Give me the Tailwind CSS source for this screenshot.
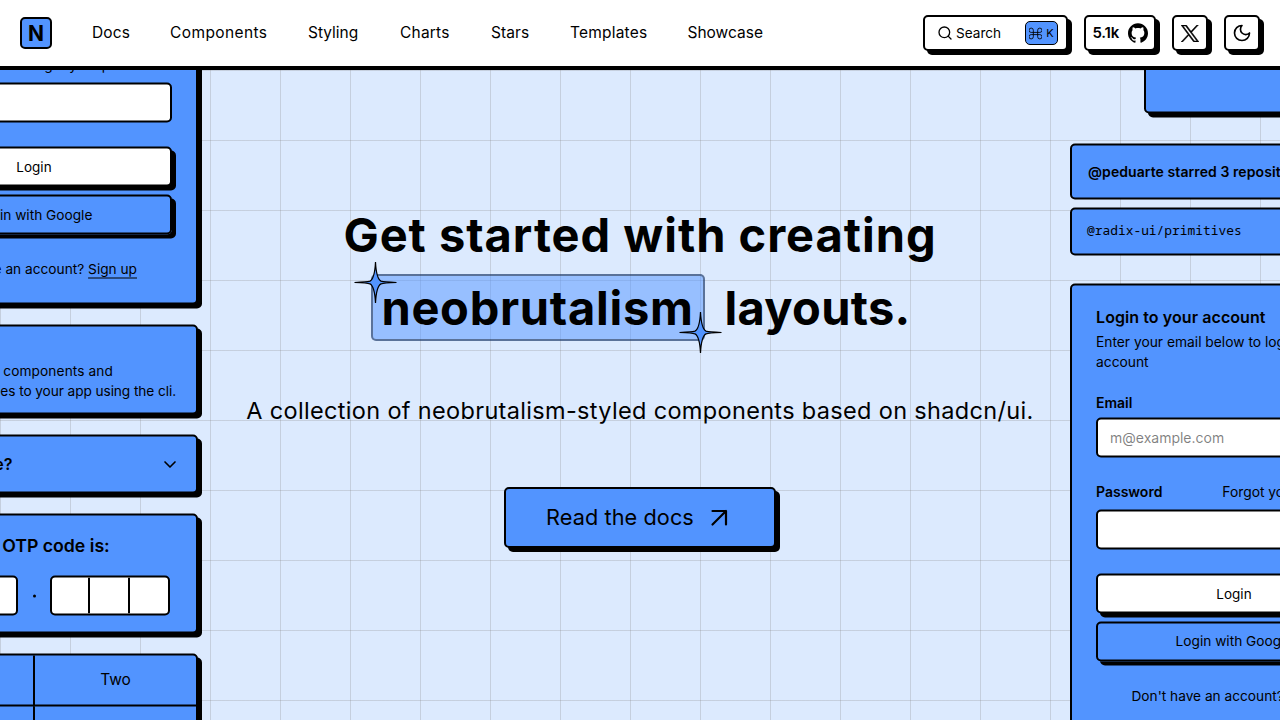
<!DOCTYPE html>
<html lang="en">
<head>
<meta charset="utf-8">
<title>Neobrutalism components</title>
<script src="https://cdn.jsdelivr.net/npm/@tailwindcss/browser@4"></script>
</head>
<body class="h-[720px] w-[1280px] overflow-hidden bg-[#dceafe] font-['Inter',sans-serif] text-black">
<header class="flex h-[70px] items-center justify-between border-b-4 border-black bg-white pr-5 pl-5">
  <div class="flex items-center">
    <div class="flex size-8 items-center justify-center rounded-[5px] border-2 border-black bg-[#5294ff] text-[21px] leading-none font-bold">N</div>
    <nav class="ml-10 flex gap-10 text-[15.5px] leading-6">
      <a class="w-[38px] tracking-[0.1px] whitespace-nowrap">Docs</a>
      <a class="w-[98px] tracking-[0.4px] whitespace-nowrap">Components</a>
      <a class="w-[52px] whitespace-nowrap">Styling</a>
      <a class="w-[51px] tracking-[0.2px] whitespace-nowrap">Charts</a>
      <a class="w-[39px] tracking-[0.1px] whitespace-nowrap">Stars</a>
      <a class="w-[77.5px] tracking-[0.2px] whitespace-nowrap">Templates</a>
      <a class="w-[76px] whitespace-nowrap">Showcase</a>
    </nav>
  </div>
  <div class="flex items-center gap-4">
    <button class="flex h-9 w-[145px] items-center rounded-[5px] border-2 border-black bg-white pl-3 shadow-[4px_4px_0_0_#000]">
      <svg class="size-4" viewBox="0 0 24 24" fill="none" stroke="currentColor" stroke-width="2" stroke-linecap="round"><circle cx="11" cy="11" r="8"/><path d="m21 21-4.3-4.3"/></svg>
      <span class="ml-[3px] w-[47px] text-left text-[13.6px] leading-5">Search</span>
      <span class="ml-[22px] flex h-6 w-[33px] items-center justify-center gap-1 rounded-[5px] border border-black bg-[#5294ff]">
        <svg class="size-[13px]" viewBox="0 0 24 24" fill="none" stroke="currentColor" stroke-width="1.6"><path d="M16 6v12a4 4 0 1 0 4-4H4a4 4 0 1 0 4 4V6a4 4 0 1 0-4 4h16a4 4 0 1 0-4-4"/></svg>
        <span class="text-[11px] leading-[14px]">K</span>
      </span>
    </button>
    <button class="flex h-9 w-[72px] items-center justify-between rounded-[5px] border-2 border-black bg-white pr-[6px] pl-[6.5px] shadow-[4px_4px_0_0_#000]">
      <span class="text-[15px] leading-5 font-semibold tracking-[-0.2px]">5.1k</span>
      <svg class="size-5" viewBox="0 0 24 24" fill="currentColor"><path d="M12 .297c-6.63 0-12 5.373-12 12 0 5.303 3.438 9.8 8.205 11.385.6.113.82-.258.82-.577 0-.285-.01-1.04-.015-2.04-3.338.724-4.042-1.61-4.042-1.61C4.422 18.07 3.633 17.7 3.633 17.7c-1.087-.744.084-.729.084-.729 1.205.084 1.838 1.236 1.838 1.236 1.07 1.835 2.809 1.305 3.495.998.108-.776.417-1.305.76-1.605-2.665-.3-5.466-1.332-5.466-5.93 0-1.31.465-2.38 1.235-3.22-.135-.303-.54-1.523.105-3.176 0 0 1.005-.322 3.3 1.23.96-.267 1.98-.399 3-.405 1.02.006 2.04.138 3 .405 2.28-1.552 3.285-1.23 3.285-1.23.645 1.653.24 2.873.12 3.176.765.84 1.23 1.91 1.23 3.22 0 4.61-2.805 5.625-5.475 5.92.42.36.81 1.096.81 2.22 0 1.606-.015 2.896-.015 3.286 0 .315.21.69.825.57C20.565 22.092 24 17.592 24 12.297c0-6.627-5.373-12-12-12"/></svg>
    </button>
    <button class="flex size-9 items-center justify-center rounded-[5px] border-2 border-black bg-white shadow-[4px_4px_0_0_#000]">
      <svg class="h-[17px] w-[18px]" viewBox="0 0 1200 1227" preserveAspectRatio="none" fill="currentColor" stroke="currentColor" stroke-width="34"><path d="M714.163 519.284L1160.89 0H1055.03L667.137 450.887L357.328 0H0L468.492 681.821L0 1226.37H105.866L515.491 750.218L842.672 1226.37H1200L714.137 519.284H714.163ZM569.165 687.828L521.697 619.934L144.011 79.6944H306.615L611.412 515.685L658.88 583.579L1055.08 1150.3H892.476L569.165 687.854V687.828Z"/></svg>
    </button>
    <button class="flex size-9 items-center justify-center rounded-[5px] border-2 border-black bg-white shadow-[4px_4px_0_0_#000]">
      <svg class="size-5" viewBox="0 0 24 24" fill="none" stroke="currentColor" stroke-width="2" stroke-linecap="round" stroke-linejoin="round"><path d="M12 3a6 6 0 0 0 9 9 9 9 0 1 1-9-9Z"/></svg>
    </button>
  </div>
</header>

<main class="flex h-[650px] overflow-hidden bg-[linear-gradient(to_right,#80808040_1px,transparent_1px),linear-gradient(to_bottom,#80808040_1px,transparent_1px)] bg-[size:70px_70px]">
  <!-- left column of component previews -->
  <div class="-mt-[213px] -ml-[130px] flex w-[328px] shrink-0 -translate-y-[0.5px] flex-col gap-5 self-start text-sm">
    <section class="h-[448px] rounded-[5px] border-2 border-black bg-[#5294ff] p-6 shadow-[4px_4px_0_0_#000]">
      <h3 class="mb-1.5 text-base leading-none font-semibold">Login to your account</h3>
      <p class="leading-5">Enter your email below to login to your account</p>
      <div class="mt-6 leading-[14px] font-semibold">Email</div>
      <div class="mt-2 flex h-10 items-center rounded-[5px] border-2 border-black bg-white px-3 text-black/50">m@example.com</div>
      <div class="mt-6 flex justify-between leading-5"><b class="font-semibold">Password</b><a class="text-[13.7px]">Forgot your password?</a></div>
      <div class="mt-2 h-10 rounded-[5px] border-2 border-black bg-white"></div>
      <div class="mt-6 flex h-10 items-center justify-center rounded-[5px] border-2 border-black bg-white pt-px text-[13.5px] shadow-[4px_4px_0_0_#000]">Login</div>
      <div class="mt-2 flex h-10 items-center justify-center rounded-[5px] border-2 border-black pt-px text-[13.7px] shadow-[4px_4px_0_0_#000]">Login with Google</div>
      <div class="mt-6 pl-px text-center text-[13.7px] leading-5 whitespace-nowrap">Don't have an account? <a class="underline underline-offset-4">Sign up</a></div>
    </section>
    <section class="flex h-[90px] flex-col justify-end rounded-[5px] border-2 border-black bg-[#5294ff] pr-5 pb-3 text-right text-[13.7px] leading-5 whitespace-nowrap shadow-[4px_4px_0_0_#000]">
      <p class="pr-[63px] tracking-[0.1px]">You can add components and</p>
      <p class="tracking-[-0.09px]">dependencies to your app using the cli.</p>
    </section>
    <section class="flex h-[59px] items-center justify-between rounded-[5px] border-2 border-black bg-[#5294ff] pr-4 pl-4 shadow-[4px_4px_0_0_#000]">
      <b class="pb-px pl-[2px] text-base font-semibold">Is it accessible?</b>
      <svg class="size-5" viewBox="0 0 24 24" fill="none" stroke="currentColor" stroke-width="2" stroke-linecap="round" stroke-linejoin="round"><path d="m6 9 6 6 6-6"/></svg>
    </section>
    <section class="flex h-[120px] flex-col items-center rounded-[5px] border-2 border-black bg-[#5294ff] pt-4 shadow-[4px_4px_0_0_#000]">
      <b class="text-[17.7px] leading-7 font-semibold">Your OTP code is:</b>
      <div class="mt-4 flex items-center">
        <div class="flex h-10 w-[120px] divide-x-2 divide-black overflow-hidden rounded-[5px] border-2 border-black bg-white"><i class="w-[38px]"></i><i class="w-10"></i><i class="flex-1"></i></div>
        <div class="flex w-8 justify-center"><i class="size-[3px] rounded-full bg-black"></i></div>
        <div class="flex h-10 w-[120px] divide-x-2 divide-black overflow-hidden rounded-[5px] border-2 border-black bg-white"><i class="w-[38px]"></i><i class="w-10"></i><i class="flex-1"></i></div>
      </div>
    </section>
    <section class="grid h-[160px] grid-cols-2 grid-rows-[51px_1fr] rounded-[5px] border-2 border-black bg-[#5294ff] text-[15.5px] shadow-[4px_4px_0_0_#000]">
      <div class="flex items-center justify-center border-b-2 border-black">One</div>
      <div class="-ml-px flex items-center justify-center border-b-2 border-l-2 border-black">Two</div>
      <div></div>
      <div class="-ml-px border-l-2 border-black"></div>
    </section>
  </div>

  <!-- hero -->
  <div class="flex w-[872px] shrink-0 flex-col items-center pt-[130px]">
    <h1 class="w-full text-center text-[47px] leading-[72px] font-bold whitespace-nowrap text-black">
      <span class="-mt-px ml-[12px] block tracking-[0.97px]">Get started with creating</span>
      <span class="mt-px ml-[11px] flex justify-center">
        <span class="relative mt-[2px] mr-5 flex h-[67px] w-[334px] items-center justify-center rounded-[5px] border-2 border-black/40 bg-[#5294ff]/50">
          <span class="tracking-[0.72px]">neobrutalism</span>
          <svg class="absolute -top-[15px] -left-[19px] size-[43px]" viewBox="0 0 43 43"><path d="M21.5 1C22.1 13 24.5 18.8 27 20.1 29.5 21 34 21.2 42.5 21.5 34 21.8 29.5 22 27 22.9 24.5 24.2 22.1 30 21.5 42 20.9 30 18.5 24.2 16 22.9 13.5 22 9 21.8.5 21.5 9 21.2 13.5 21 16 20.1 18.5 18.8 20.9 13 21.5 1Z" fill="#5294ff" stroke="#000" stroke-width="1.2"/></svg>
          <svg class="absolute -right-[19px] -bottom-[15px] size-[43px]" viewBox="0 0 43 43"><path d="M21.5 1C22.1 13 24.5 18.8 27 20.1 29.5 21 34 21.2 42.5 21.5 34 21.8 29.5 22 27 22.9 24.5 24.2 22.1 30 21.5 42 20.9 30 18.5 24.2 16 22.9 13.5 22 9 21.8.5 21.5 9 21.2 13.5 21 16 20.1 18.5 18.8 20.9 13 21.5 1Z" fill="#5294ff" stroke="#000" stroke-width="1.2"/></svg>
        </span>
        <span class="w-[184px] text-left tracking-[0.3px]">layouts.</span>
      </span>
    </h1>
    <p class="mt-[49px] ml-[12px] text-[23.5px] leading-9 tracking-[0.33px] whitespace-nowrap">A collection of neobrutalism-styled components based on shadcn/ui.</p>
    <a class="mt-[58px] ml-[12px] flex h-[61px] w-[272px] items-center rounded-[5px] border-2 border-black bg-[#5294ff] pl-10 shadow-[4px_4px_0_0_#000]">
      <span class="w-[148px] text-[21.7px] tracking-[0.08px] whitespace-nowrap">Read the docs</span>
      <svg class="ml-[9px] size-[32px]" viewBox="0 0 32 32" fill="none" stroke="currentColor" stroke-width="2.2" stroke-linecap="round" stroke-linejoin="round"><path d="M9.500 9h13.500v13.500M23 9 9.500 22.500"/></svg>
    </a>
  </div>

  <!-- right column of component previews -->
  <div class="-mt-[136px] flex w-[328px] shrink-0 -translate-y-[0.5px] flex-col self-start text-sm">
    <section class="mx-auto h-[180px] w-[180px] rounded-[5px] border-2 border-black bg-[#5294ff] shadow-[4px_4px_0_0_#000]"></section>
    <section class="mt-[30px] flex h-14 items-center rounded-[5px] border-2 border-black bg-[#5294ff] px-4 font-semibold tracking-[0.08px] whitespace-nowrap">@peduarte starred 3 repositories</section>
    <section class="mt-2 flex h-12 items-center rounded-[5px] border-2 border-black bg-[#5294ff] px-[15px] pb-[3px] font-['Noto_Sans_Mono',monospace] text-[12.9px]">@radix-ui/primitives</section>
    <section class="mt-7 h-[448px] rounded-[5px] border-2 border-black bg-[#5294ff] p-6 shadow-[4px_4px_0_0_#000]">
      <h3 class="-mt-px mb-[7px] text-base leading-none font-semibold tracking-[0.08px]">Login to your account</h3>
      <p class="text-[13.8px] leading-5">Enter your email below to login to your account</p>
      <div class="mt-6 leading-[14px] font-semibold">Email</div>
      <div class="mt-2 flex h-10 items-center rounded-[5px] border-2 border-black bg-white px-3 text-black/50">m@example.com</div>
      <div class="mt-6 flex justify-between leading-5"><b class="font-semibold">Password</b><a class="text-[13.8px]">Forgot your password?</a></div>
      <div class="mt-2 h-10 rounded-[5px] border-2 border-black bg-white"></div>
      <div class="mt-6 flex h-10 items-center justify-center rounded-[5px] border-2 border-black bg-white pt-px text-[13.5px] shadow-[4px_4px_0_0_#000]">Login</div>
      <div class="mt-2 flex h-10 items-center justify-center rounded-[5px] border-2 border-black text-[13.7px] shadow-[4px_4px_0_0_#000]">Login with Google</div>
      <div class="mt-6 text-center text-[13.7px] leading-5 whitespace-nowrap">Don't have an account? <a class="underline underline-offset-4">Sign up</a></div>
    </section>
  </div>
</main>
</body>
</html>
